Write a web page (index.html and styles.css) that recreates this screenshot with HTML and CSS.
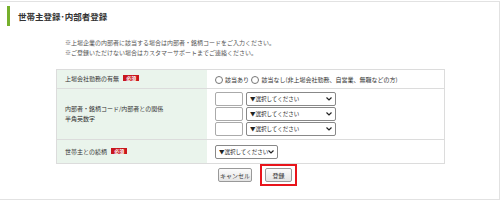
FILE: index.html
```html
<!DOCTYPE html>
<html lang="ja">
<head>
  <meta charset="UTF-8">
  <title>世帯主登録・内部者登録</title>
  <link rel="stylesheet" href="styles.css">
</head>
<body>
<div class="panel">
  <h2 class="title">世帯主登録･内部者登録</h2>
  <div class="notes">
    <p>※上場企業の内部者に該当する場合は内部者・銘柄コードをご入力ください。</p>
    <p>※ご登録いただけない場合はカスタマーサポートまでご連絡ください。</p>
  </div>
  <table class="form-table">
    <tr class="row-a">
      <th>上場会社勤務の有無 <span class="req">必須</span></th>
      <td>
        <label><input type="radio" name="kinmu">該当あり</label>
        <label><input type="radio" name="kinmu">該当なし(非上場会社勤務、自営業、無職などの方)</label>
      </td>
    </tr>
    <tr class="row-b">
      <th>内部者・銘柄コード/内部者との関係<br>半角英数字</th>
      <td>
        <div class="code-line"><input type="text" class="code"><select class="sel rel"><option>▼選択してください</option></select></div>
        <div class="code-line"><input type="text" class="code"><select class="sel rel"><option>▼選択してください</option></select></div>
        <div class="code-line"><input type="text" class="code"><select class="sel rel"><option>▼選択してください</option></select></div>
      </td>
    </tr>
    <tr class="row-c">
      <th>世帯主との続柄 <span class="req">必須</span></th>
      <td><select class="sel zoku"><option>▼選択してください</option></select></td>
    </tr>
  </table>
  <div class="actions">
    <button class="btn">キャンセル</button>
    <div class="focus-box"><button class="btn btn-submit">登録</button></div>
  </div>
</div>
</body>
</html>
```

FILE: styles.css
```css
body {
  margin: 0;
  font-family: "Noto Sans CJK JP", "Noto Sans", sans-serif;
  color: #333;
  background: #fff;
}
.panel {
  box-sizing: border-box;
  width: 500px;
  height: 199px;
  margin-top: 1px;
  border: 1px solid #e2e2e2;
  border-left: none;
  padding-top: 4px;
}
.title {
  margin: 0 0 0 7px;
  height: 20px;
  line-height: 20px;
  border-left: 3px solid #76b02c;
  padding-left: 8px;
  font-size: 8.5px;
  font-weight: bold;
  color: #333;
}
.notes {
  margin: 12px 0 0 65px;
  font-size: 6px;
  line-height: 10px;
  color: #555;
}
.notes p {
  margin: 0;
}
.form-table {
  margin: 11px 0 0 56px;
  width: 389px;
  border-collapse: collapse;
  border: 1px solid #dcdcdc;
  font-size: 6px;
}
.form-table th,
.form-table td {
  border-top: 1px solid #dcdcdc;
  text-align: left;
  vertical-align: middle;
  padding: 0 0 0 8px;
}
.form-table th {
  width: 142px;
  background: #eaf4ec;
  font-weight: normal;
  line-height: 10px;
  color: #333;
}
.row-a th, .row-a td { height: 18px; }
.row-b th, .row-b td { height: 50px; }
.row-c th, .row-c td { height: 23px; }
.req {
  display: inline-block;
  background: #c8161d;
  color: #fff;
  font-size: 5px;
  line-height: 6px;
  padding: 0 3px;
  margin-left: 3px;
  vertical-align: 1px;
  font-weight: bold;
}
.form-table label {
  margin-right: 1px;
}
.form-table input[type=radio] {
  width: 8px;
  height: 8px;
  margin: 0 2px 0 0;
  vertical-align: -2px;
}
.code-line {
  display: flex;
  gap: 3px;
  margin: 1px 0;
}
.code {
  box-sizing: border-box;
  width: 28px;
  height: 14px;
  border: 1px solid #aaa;
  border-radius: 2px;
  margin: 0;
  padding: 0;
}
.sel {
  appearance: none;
  box-sizing: border-box;
  height: 14px;
  font-size: 5.5px;
  font-family: inherit;
  border: 1px solid #888;
  border-radius: 2px;
  padding: 0 7px 0 3px;
  color: #222;
  background: #fff url("data:image/svg+xml,%3Csvg xmlns='http://www.w3.org/2000/svg' width='6' height='4'%3E%3Cpath d='M0.5 0.5L3 3L5.5 0.5' fill='none' stroke='%23222' stroke-width='1.2'/%3E%3C/svg%3E") no-repeat right 3px center;
}
.rel {
  width: 90px;
}
.zoku {
  width: 63px;
}
.actions {
  display: flex;
  align-items: center;
  gap: 8px;
  padding-left: 218px;
}
.btn {
  box-sizing: border-box;
  width: 34px;
  height: 14px;
  padding: 0;
  font-size: 6px;
  font-family: inherit;
  color: #333;
  background: linear-gradient(#fbfbfb, #e4e4e4);
  border: 1px solid #999;
  border-radius: 2px;
}
.focus-box {
  display: flex;
  border: 2px solid #e8141b;
  padding: 2px 3px;
}
.btn-submit {
  width: 27px;
}
```
